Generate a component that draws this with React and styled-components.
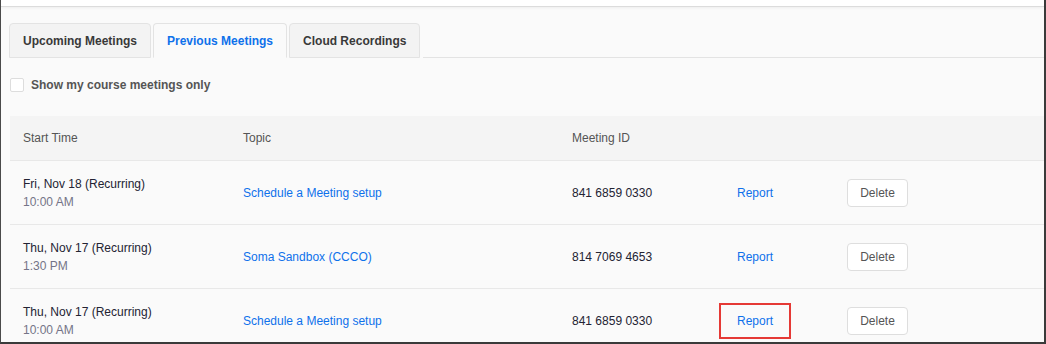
import React from "react";
import styled, { createGlobalStyle } from "styled-components";

const GlobalStyle = createGlobalStyle`
  html, body {
    margin: 0;
    padding: 0;
    background: #ffffff;
  }
  * {
    box-sizing: border-box;
  }
`;

const meetings = [
  {
    date: "Fri, Nov 18 (Recurring)",
    time: "10:00 AM",
    topic: "Schedule a Meeting setup",
    id: "841 6859 0330",
  },
  {
    date: "Thu, Nov 17 (Recurring)",
    time: "1:30 PM",
    topic: "Soma Sandbox (CCCO)",
    id: "814 7069 4653",
  },
  {
    date: "Thu, Nov 17 (Recurring)",
    time: "10:00 AM",
    topic: "Schedule a Meeting setup",
    id: "841 6859 0330",
    marked: true,
  },
];

function App() {
  return (
    <Frame>
      <GlobalStyle />
      <TopStrip />
      <Content>
        <Tabs>
          <Tab>Upcoming Meetings</Tab>
          <Tab active>Previous Meetings</Tab>
          <Tab>Cloud Recordings</Tab>
          <TabRest />
        </Tabs>

        <Filter>
          <Check />
          <span>Show my course meetings only</span>
        </Filter>

        <Table>
          <HeadRow>
            <HeadCell>Start Time</HeadCell>
            <HeadCell>Topic</HeadCell>
            <HeadCell>Meeting ID</HeadCell>
            <HeadCell />
            <HeadCell />
          </HeadRow>
          {meetings.map((m, i) => (
            <Row key={i}>
              <div>
                <DateLine>{m.date}</DateLine>
                <TimeLine>{m.time}</TimeLine>
              </div>
              <div>
                <Link>{m.topic}</Link>
              </div>
              <IdCell>{m.id}</IdCell>
              <div>
                <Link marked={m.marked}>Report</Link>
              </div>
              <div>
                <DeleteButton>Delete</DeleteButton>
              </div>
            </Row>
          ))}
        </Table>
      </Content>
    </Frame>
  );
}

export default App;

const Frame = styled.div`
  width: 1046px;
  height: 344px;
  overflow: hidden;
  background: #fafafa;
  border-left: 1px solid #4a4a4a;
  border-right: 2px solid #3a3a3a;
  border-bottom: 2px solid #3a3a3a;
  font-family: "Liberation Sans", Arial, sans-serif;
  font-size: 12px;
  color: #232333;
`;

const TopStrip = styled.div`
  height: 7px;
  background: #ffffff;
  border-bottom: 1px solid #dcdcdc;
  box-shadow: 0 1px 3px rgba(0, 0, 0, 0.05);
`;

const Content = styled.div`
  padding: 16px 0 0 8px;
`;

const Tabs = styled.div`
  display: flex;
  align-items: flex-end;
  height: 35px;
`;

const Tab = styled.div`
  height: 35px;
  padding: 0 13px;
  margin-right: 2px;
  display: flex;
  align-items: center;
  font-weight: bold;
  font-size: 12px;
  color: ${(p) => (p.active ? "#0e71eb" : "#393939")};
  background: ${(p) => (p.active ? "#fafafa" : "#f3f3f3")};
  border: 1px solid #e3e3e3;
  border-bottom: 1px solid ${(p) => (p.active ? "#fafafa" : "#e3e3e3")};
  border-radius: 4px 4px 0 0;
`;

const TabRest = styled.div`
  flex: 1;
  margin-left: 1px;
  border-bottom: 1px solid #e3e3e3;
`;

const Filter = styled.div`
  display: flex;
  align-items: center;
  gap: 7px;
  margin: 20px 0 0 1px;
  height: 14px;
  font-weight: bold;
  font-size: 12px;
  color: #555555;
`;

const Check = styled.span`
  width: 14px;
  height: 14px;
  border: 1px solid #dddddd;
  border-radius: 2px;
  background: #ffffff;
`;

const Table = styled.div`
  margin: 24px 0 0 1px;
`;

const columns = "220px 329px 165px 110px 1fr";

const HeadRow = styled.div`
  display: grid;
  grid-template-columns: ${columns};
  align-items: center;
  height: 45px;
  padding-left: 13px;
  background: #f4f4f4;
  border-bottom: 1px solid #e8e8e8;
`;

const HeadCell = styled.div`
  color: #555555;
  font-size: 12px;
`;

const Row = styled.div`
  display: grid;
  grid-template-columns: ${columns};
  align-items: center;
  height: 64px;
  padding-left: 13px;
  border-bottom: 1px solid #e8e8e8;
`;

const DateLine = styled.div`
  line-height: 18px;
  color: #232333;
`;

const TimeLine = styled.div`
  line-height: 18px;
  color: #747487;
`;

const IdCell = styled.div`
  color: #232333;
`;

const Link = styled.span`
  position: relative;
  color: #0e71eb;
  cursor: pointer;

  ${(p) =>
    p.marked &&
    `
    &::after {
      content: "";
      position: absolute;
      left: -18px;
      right: -18px;
      top: -11px;
      bottom: -11px;
      border: 2px solid #e53935;
    }
  `}
`;

const DeleteButton = styled.button`
  width: 61px;
  height: 28px;
  padding: 0;
  font-family: "Liberation Sans", Arial, sans-serif;
  font-size: 12px;
  color: #555555;
  background: #ffffff;
  border: 1px solid #dedede;
  border-radius: 4px;
`;
